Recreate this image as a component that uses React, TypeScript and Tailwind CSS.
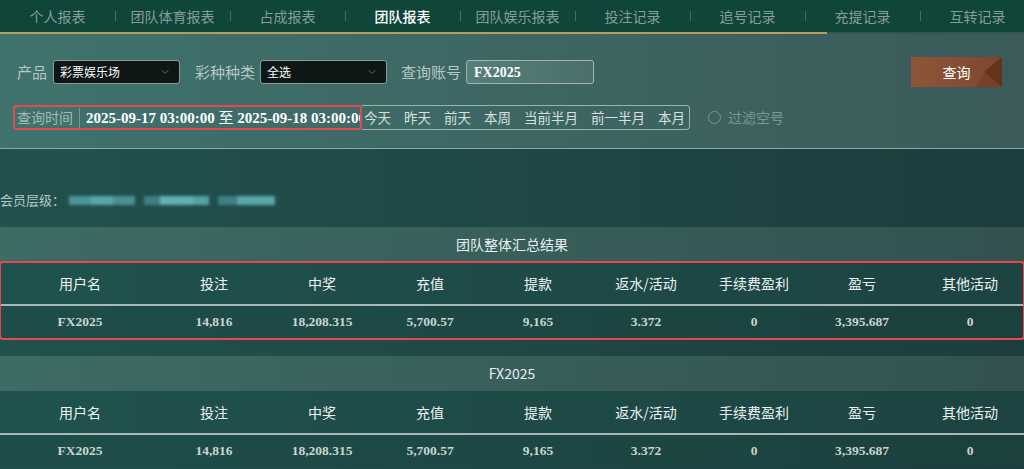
import { ChevronDown } from 'lucide-react';

const tabs = ['个人报表', '团队体育报表', '占成报表', '团队报表', '团队娱乐报表', '投注记录', '追号记录', '充提记录', '互转记录'];
const quick = ['今天', '昨天', '前天', '本周', '当前半月', '前一半月', '本月'];
const columns = ['用户名', '投注', '中奖', '充值', '提款', '返水/活动', '手续费盈利', '盈亏', '其他活动'];
const row = ['FX2025', '14,816', '18,208.315', '5,700.57', '9,165', '3.372', '0', '3,395.687', '0'];

const sans = "font-['Noto_Sans_CJK_SC',sans-serif]";
const serif = "font-['Liberation_Serif','Noto_Sans_CJK_SC',serif]";

function Select({ value }: { value: string }) {
    return (
        <div className="flex h-[24px] w-[127px] items-center justify-between rounded-[3px] border border-[#8c9b99] bg-[#0e1716] pl-[6px] pr-[8px]">
            <span className="text-[12px] text-white">{value}</span>
            <ChevronDown size={12} strokeWidth={1.5} className="text-[#7d8a88]" />
        </div>
    );
}

function ReportTable({ title, marked }: { title: string; marked?: boolean }) {
    return (
        <div>
            <div className="flex h-[35px] items-center justify-center bg-linear-to-r from-[#3d6b66] to-[#33524f] text-[14px] text-[#e8efee]">
                {title}
            </div>
            <div className={marked ? 'rounded-[3px] outline-2 -outline-offset-1 outline-[#e5484d]' : ''}>
                <div className="grid h-[42px] grid-cols-[160px_repeat(8,1fr)] items-center bg-linear-to-r from-[#1f524e] to-[#1c4341] text-[14px] text-[#eef3f2]">
                    {columns.map((c) => (
                        <div key={c} className="text-center">{c}</div>
                    ))}
                </div>
                <div className="h-[2px] bg-[#a6b9b6]" />
                <div className={`grid h-[33px] grid-cols-[160px_repeat(8,1fr)] items-center bg-linear-to-r from-[#1e4e4a] to-[#1b403e] text-[13.5px] font-bold text-[#c9d5d2] ${serif}`}>
                    {row.map((v, i) => (
                        <div key={i} className="text-center">{v}</div>
                    ))}
                </div>
            </div>
        </div>
    );
}

export default function App() {
    return (
        <div className={`h-[469px] w-[1024px] overflow-hidden bg-linear-to-r from-[#21524e] to-[#1c3d3d] ${sans}`}>
            {/* top tabs */}
            <div className="flex h-[32px] overflow-hidden bg-[#104539]">
                {tabs.map((t, i) => (
                    <div key={t} className="relative flex w-[115px] shrink-0 items-center justify-center">
                        {i > 0 && <span className="absolute left-0 top-[11px] h-[10px] w-px bg-[#3f6f64]" />}
                        <span className={`text-[14px] ${t === '团队报表' ? 'font-medium text-white' : 'text-[#849f98]'}`}>{t}</span>
                    </div>
                ))}
            </div>
            <div className="flex h-[2px] bg-[#2f5853]">
                <div className="w-[827px] bg-[#b89d5f]" />
            </div>

            {/* filters */}
            <div className="flex h-[115px] flex-col gap-[18px] border-b border-[#8ea8a4] bg-linear-to-r from-[#3f736e] to-[#3b5a59] pt-[23px]">
                <div className="flex h-[30px] items-center pl-[17px] pr-[22px] text-[15px] text-[#b7c8c4]">
                    <span>产品</span>
                    <div className="ml-[6px]"><Select value="彩票娱乐场" /></div>
                    <span className="ml-[15px]">彩种种类</span>
                    <div className="ml-[5px]"><Select value="全选" /></div>
                    <span className="ml-[14px]">查询账号</span>
                    <div className={`ml-[5px] flex h-[24px] w-[128px] items-center rounded-[3px] border border-[#a3b3b0] bg-linear-to-r from-[#56807b] to-[#4b6f6b] pl-[7px] text-[14px] font-bold text-white ${serif}`}>
                        FX2025
                    </div>
                    <button className="relative ml-auto h-[30px] w-[91px] overflow-hidden bg-linear-to-r from-[#8d5639] to-[#7d472c] text-[14px] text-white">
                        <svg className="absolute right-0 top-0" width="30" height="30" viewBox="0 0 30 30">
                            <polygon points="12,15 30,0 30,30" fill="#4c220f" opacity="0.55" />
                            <polygon points="12,15 30,30 4,30" fill="#6a3820" opacity="0.45" />
                        </svg>
                        <span className="relative">查询</span>
                    </button>
                </div>

                <div className="flex h-[25px] items-center pl-[13px]">
                    <div className="flex h-[25px] w-[349px] shrink-0 items-center overflow-hidden rounded-[3px] border-2 border-[#e5484d]">
                        <span className="shrink-0 pl-[2px] text-[14px] text-[#a3bab5]">查询时间</span>
                        <span className="mx-[6px] h-[20px] w-px shrink-0 bg-[#7d9692]" />
                        <span className={`overflow-hidden whitespace-nowrap text-[15px] font-bold text-white ${serif}`}>
                            2025-09-17 03:00:00 <span className={`font-normal ${sans}`}>至</span> 2025-09-18 03:00:00
                        </span>
                    </div>
                    <div className="flex h-[25px] items-center gap-[13px] rounded-r-[4px] border border-l-0 border-[#9fb2ae] pl-[2px] pr-[4px] text-[13.5px] text-[#d7e0de]">
                        {quick.map((q) => (
                            <span key={q}>{q}</span>
                        ))}
                    </div>
                    <span className="ml-[18px] h-[13px] w-[13px] rounded-full border-[1.5px] border-[#7b9692]" />
                    <span className="ml-[7px] text-[14px] text-[#7a9793]">过滤空号</span>
                </div>
            </div>

            {/* member level */}
            <div className="flex h-[78px] items-center pt-[24px] text-[13px] text-[#b5c7c3]">
                <span>会员层级：</span>
                <div className="ml-[4px] flex items-center gap-[9px] blur-[1.5px]">
                    <div className="flex h-[9px] w-[66px]"><div className="w-1/3 bg-[#4d9499]" /><div className="w-1/3 bg-[#5aa5aa]" /><div className="w-1/3 bg-[#4a8f94]" /></div>
                    <div className="flex h-[9px] w-[65px]"><div className="w-1/4 bg-[#3f7f83]" /><div className="w-1/2 bg-[#63b1b6]" /><div className="w-1/4 bg-[#57a2a7]" /></div>
                    <div className="flex h-[9px] w-[57px]"><div className="w-1/3 bg-[#3f7f83]" /><div className="w-2/3 bg-[#5aa6ab]" /></div>
                </div>
            </div>

            <ReportTable title="团队整体汇总结果" marked />
            <div className="h-[17px]" />
            <ReportTable title="FX2025" />
        </div>
    );
}
